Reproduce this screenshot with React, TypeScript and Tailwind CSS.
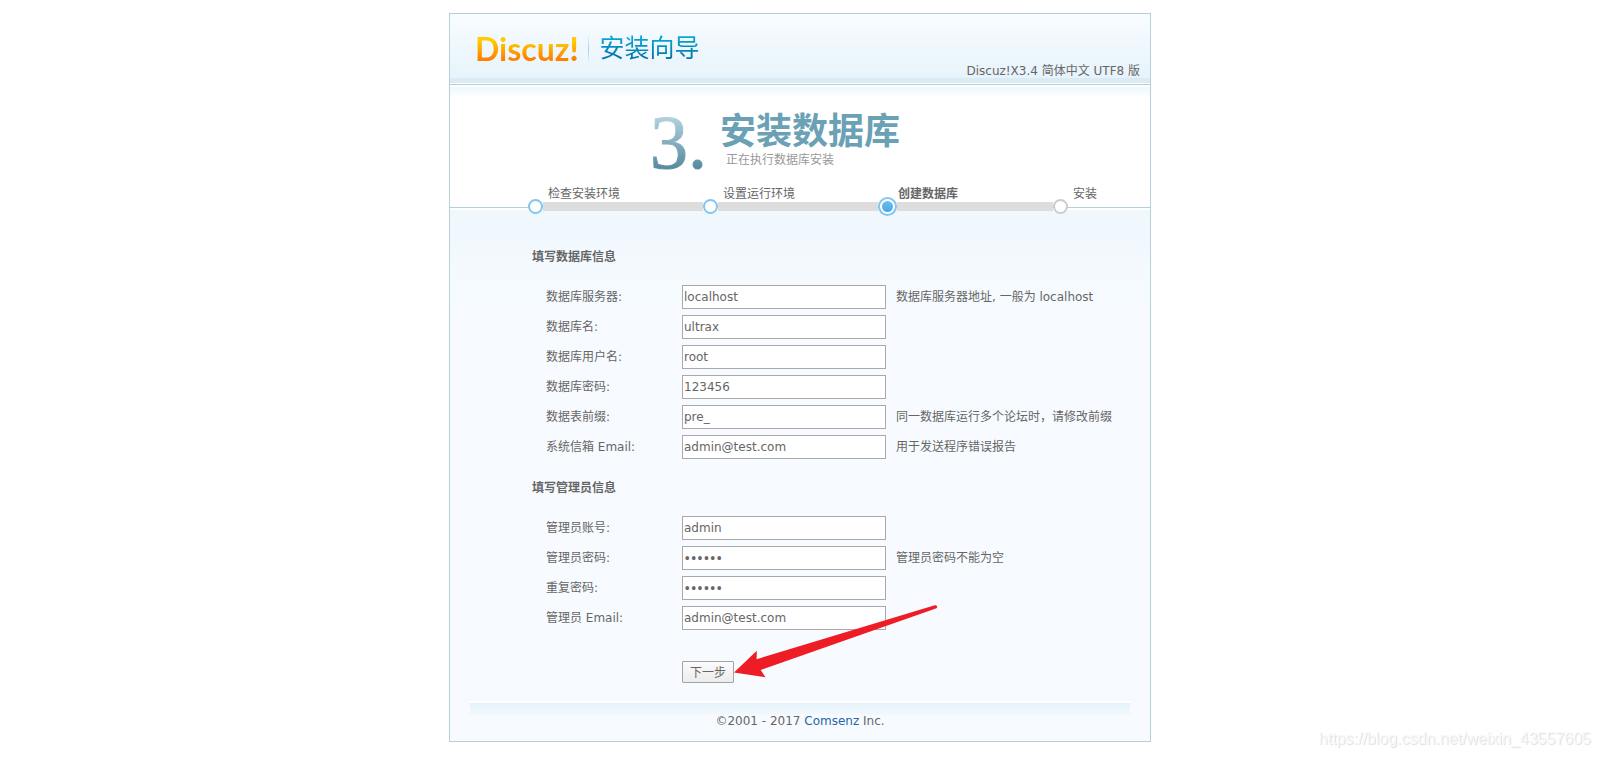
import React from "react";

type Field = {
  id: string;
  label: string;
  value: string;
  type?: string;
  hint?: string;
};

const databaseFields: Field[] = [
  { id: "dbhost", label: "数据库服务器:", value: "localhost", hint: "数据库服务器地址, 一般为 localhost" },
  { id: "dbname", label: "数据库名:", value: "ultrax" },
  { id: "dbuser", label: "数据库用户名:", value: "root" },
  { id: "dbpw", label: "数据库密码:", value: "123456" },
  { id: "tablepre", label: "数据表前缀:", value: "pre_", hint: "同一数据库运行多个论坛时，请修改前缀" },
  { id: "adminemail", label: "系统信箱 Email:", value: "admin@test.com", hint: "用于发送程序错误报告" },
];

const adminFields: Field[] = [
  { id: "username", label: "管理员账号:", value: "admin" },
  { id: "password", label: "管理员密码:", value: "123456", type: "password", hint: "管理员密码不能为空" },
  { id: "password2", label: "重复密码:", value: "123456", type: "password" },
  { id: "email", label: "管理员 Email:", value: "admin@test.com" },
];

type StepState = "done" | "current" | "pending";

const steps: { name: string; state: StepState }[] = [
  { name: "检查安装环境", state: "done" },
  { name: "设置运行环境", state: "done" },
  { name: "创建数据库", state: "current" },
  { name: "安装", state: "pending" },
];

function Marker({ state }: { state: StepState }) {
  if (state === "current") {
    return (
      <span className="-my-[2px] flex size-[19px] shrink-0 items-center justify-center rounded-full border-2 border-[#84c5ef] bg-white">
        <span className="size-[11px] rounded-full bg-linear-to-b from-[#6fbdf0] to-[#45a9e8]" />
      </span>
    );
  }
  return (
    <span
      className={
        state === "done"
          ? "size-[15px] shrink-0 rounded-full border-2 border-[#84c5ef] bg-white"
          : "size-[15px] shrink-0 rounded-full border-2 border-[#cccccc] bg-white"
      }
    />
  );
}

function Header() {
  return (
    <header className="border-b border-[#b5cfd9]">
      <div className="flex h-[70px] items-end justify-between border-b border-white bg-[linear-gradient(to_bottom,#f8fcff_0,#e7f3fb_64px,#dbebf5_64px,#dbebf5_100%)]">
        <h1 className="flex items-center self-start pt-[19px] pl-[25px]">
          <span className="bg-linear-to-b from-[#ffcc00] from-25% to-[#ff8000] to-80% bg-clip-text font-['Lato'] text-[32px] leading-8 font-bold text-transparent">
            Discuz<span className="font-black">!</span>
          </span>
          <span className="ml-[9px] h-[26px] w-px bg-linear-to-b from-[#e8f2f8] via-[#a9cfe0] to-[#e8f2f8]" />
          <span className="ml-[11px] bg-linear-to-b from-[#0aa5d3] from-15% to-[#0069a3] to-90% bg-clip-text text-[25px] leading-8 text-transparent">
            安装向导
          </span>
        </h1>
        <p className="pr-[10px] pb-1 leading-4">Discuz!X3.4 简体中文 UTF8 版</p>
      </div>
    </header>
  );
}

function StepTitle() {
  return (
    <div className="flex h-[103px] bg-[linear-gradient(to_bottom,#ffffff_0,#ffffff_2px,#eff7fd_2px,#ffffff_13px)] pt-[19px] pl-[200px]">
      <span className="bg-linear-to-b from-[#b3d3df] from-15% to-[#4a8298] to-85% bg-clip-text font-['Liberation_Serif'] text-[76px] leading-[76px] text-transparent [-webkit-text-stroke:1px_transparent]">
        3.
      </span>
      <div className="pt-2 pl-[13px]">
        <h2 className="text-[36px] leading-10 font-bold text-[#6ba1b5]">安装数据库</h2>
        <p className="pl-[6px] leading-4 text-[#999999]">正在执行数据库安装</p>
      </div>
    </div>
  );
}

function Steps() {
  return (
    <ol className="grid grid-cols-[175px_175px_175px_1fr] bg-[linear-gradient(to_bottom,#ffffff_19px,#b5cfd9_19px,#b5cfd9_20px,#ffffff_20px,#ffffff_22px,#f0f8fd_22px)] pl-[78px]">
      {steps.map((step) => (
        <li key={step.name}>
          <span
            className={
              step.state === "current"
                ? "block h-[11px] pl-5 leading-3 font-bold whitespace-nowrap"
                : "block h-[11px] pl-5 leading-3 whitespace-nowrap"
            }
          >
            {step.name}
          </span>
          <span className="flex h-[15px] items-center">
            <Marker state={step.state} />
            {step.state !== "pending" && <span className="h-[9px] flex-1 bg-[#dddddd]" />}
          </span>
        </li>
      ))}
    </ol>
  );
}

function FieldGroup({ title, fields }: { title: string; fields: Field[] }) {
  return (
    <section>
      <h3 className="pl-[82px] leading-4 font-bold">{title}</h3>
      <div className="flex flex-col gap-[6px] pt-5 pl-24">
        {fields.map((field) => (
          <div key={field.id} className="flex items-center">
            <label htmlFor={field.id} className="w-[136px] shrink-0">
              {field.label}
            </label>
            <input
              id={field.id}
              type={field.type ?? "text"}
              defaultValue={field.value}
              className={
                field.type === "password"
                  ? "h-6 w-[204px] border border-[#a9a9a9] bg-white px-px font-['Open_Sans'] text-[17px]"
                  : "h-6 w-[204px] border border-[#a9a9a9] bg-white px-px"
              }
            />
            {field.hint && <span className="pl-[10px] whitespace-nowrap">{field.hint}</span>}
          </div>
        ))}
      </div>
    </section>
  );
}

function Arrow() {
  return (
    <svg
      className="pointer-events-none absolute -top-[57px] left-[52px] h-[75px] w-[205px]"
      viewBox="0 0 205 75"
      aria-hidden="true"
    >
      <path
        d="M0 68.500L22.800 46.800L22.600 55.200L200.800 1.200C203.500 .8 204 3.700 201.800 4.600L26.700 66L31.500 73.200Z"
        fill="#ee1c24"
      />
    </svg>
  );
}

export default function App() {
  return (
    <div className="min-h-screen bg-white py-[13px] font-['DejaVu_Sans','Noto_Sans_CJK_SC',sans-serif] text-[12px] text-[#666666]">
      <main className="mx-auto max-w-[702px] border border-[#b5cfd9] bg-[#f7fbff]">
        <Header />
        <StepTitle />
        <Steps />
        <form
          className="bg-linear-to-b from-[#f0f8fd] to-[#f7fbff] to-[100px] pt-[35px]"
          onSubmit={(event) => event.preventDefault()}
        >
          <FieldGroup title="填写数据库信息" fields={databaseFields} />
          <div className="pt-[21px]">
            <FieldGroup title="填写管理员信息" fields={adminFields} />
          </div>
          <div className="pt-[31px] pl-[232px]">
            <div className="relative flex">
              <button
                type="submit"
                className="h-[22px] w-[52px] rounded-[1px] border border-[#a3a3a3] bg-linear-to-b from-[#fbfbfb] to-[#ececec] pt-px leading-4"
              >
                下一步
              </button>
              <Arrow />
            </div>
          </div>
        </form>
        <footer className="mx-5 mt-[18px] border-t-2 border-white bg-[linear-gradient(to_bottom,#e5f2fa_0,#f1f8fd_11px,#f7fbff_12px)] pt-[10px] pb-3 text-center leading-4">
          ©2001 - 2017{" "}
          <a href="#comsenz" className="text-[#2366a8]">
            Comsenz
          </a>{" "}
          Inc.
        </footer>
      </main>
      <p className="pointer-events-none fixed right-[9px] bottom-2 font-['Liberation_Sans'] text-[16px] leading-5 text-[#f8f8f8] [text-shadow:1px_1px_1px_#dddddd]">
        https://blog.csdn.net/weixin_43557605
      </p>
    </div>
  );
}
